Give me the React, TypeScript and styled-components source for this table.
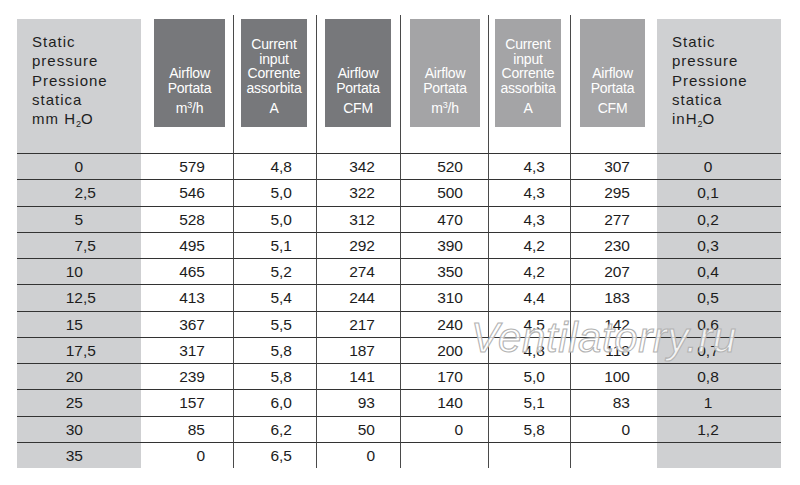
import React from "react";
import styled, { createGlobalStyle } from "styled-components";

const GlobalStyle = createGlobalStyle`
  html, body {
    margin: 0;
    padding: 0;
    background: #fff;
  }
  body {
    font-family: "Liberation Sans", Arial, sans-serif;
    color: #1c1c1c;
  }
`;

type Column = { left: number; width: number; tone: "dark" | "light"; label: string[]; unit: string; pad: number };

const columns: Column[] = [
  { left: 14, width: 71, tone: "dark", label: ["Airflow", "Portata"], unit: "m3/h", pad: 28 },
  { left: 8, width: 66, tone: "dark", label: ["Current", "input", "Corrente", "assorbita"], unit: "A", pad: 24 },
  { left: 9, width: 66, tone: "dark", label: ["Airflow", "Portata"], unit: "CFM", pad: 25 },
  { left: 10, width: 70, tone: "light", label: ["Airflow", "Portata"], unit: "m3/h", pad: 25 },
  { left: 7, width: 66, tone: "light", label: ["Current", "input", "Corrente", "assorbita"], unit: "A", pad: 25 },
  { left: 10, width: 65, tone: "light", label: ["Airflow", "Portata"], unit: "CFM", pad: 27 },
];

const rows: string[][] = [
  ["0", "579", "4,8", "342", "520", "4,3", "307", "0"],
  ["2,5", "546", "5,0", "322", "500", "4,3", "295", "0,1"],
  ["5", "528", "5,0", "312", "470", "4,3", "277", "0,2"],
  ["7,5", "495", "5,1", "292", "390", "4,2", "230", "0,3"],
  ["10", "465", "5,2", "274", "350", "4,2", "207", "0,4"],
  ["12,5", "413", "5,4", "244", "310", "4,4", "183", "0,5"],
  ["15", "367", "5,5", "217", "240", "4,5", "142", "0,6"],
  ["17,5", "317", "5,8", "187", "200", "4,8", "118", "0,7"],
  ["20", "239", "5,8", "141", "170", "5,0", "100", "0,8"],
  ["25", "157", "6,0", "93", "140", "5,1", "83", "1"],
  ["30", "85", "6,2", "50", "0", "5,8", "0", "1,2"],
  ["35", "0", "6,5", "0", "", "", "", ""],
];

const UnitText = ({ unit }: { unit: string }) =>
  unit === "m3/h" ? <>m<Sup>3</Sup>/h</> : <>{unit}</>;

export default function App() {
  return (
    <>
      <GlobalStyle />
      <Page>
        <Table>
          <PressureHead>
            Static<br />pressure<br />Pressione<br />statica<br />mm H<Sub>2</Sub>O
          </PressureHead>
          {columns.map((col, i) => (
            <HeadCell key={i} $line={i > 0}>
              <ValueBox $left={col.left} $width={col.width} $tone={col.tone}>
                <Label>
                  {col.label.map((l) => (
                    <div key={l}>{l}</div>
                  ))}
                </Label>
                <Unit><UnitText unit={col.unit} /></Unit>
              </ValueBox>
            </HeadCell>
          ))}
          <PressureHead>
            Static<br />pressure<br />Pressione<br />statica<br />inH<Sub>2</Sub>O
          </PressureHead>

          {rows.map((row, r) => {
            const [whole, frac] = row[0].split(",");
            return (
              <React.Fragment key={r}>
                <PressureCell>
                  <Whole>{whole}</Whole>
                  {frac !== undefined && `,${frac}`}
                </PressureCell>
                {columns.map((col, i) => (
                  <Cell key={i} $line={i > 0} $pad={col.pad}>
                    {row[i + 1]}
                  </Cell>
                ))}
                <InchCell>{row[7]}</InchCell>
              </React.Fragment>
            );
          })}
        </Table>
        <Watermark>Ventilatorry.ru</Watermark>
      </Page>
    </>
  );
}

const Page = styled.div`
  position: relative;
  width: 800px;
  height: 485px;
  padding: 15px 0 0 17px;
  box-sizing: border-box;
`;

const Table = styled.div`
  display: grid;
  grid-template-columns: 124px 92px 83px 84px 88px 82px 87px 124px;
  grid-template-rows: 138px repeat(12, 26.25px);
`;

const PressureHead = styled.div`
  margin-top: 4px;
  padding: 13px 0 0 15px;
  background: #cfd0d2;
  font-size: 15px;
  line-height: 19.3px;
  letter-spacing: 1px;
  color: #1e1e1e;
`;

const Sub = styled.sub`
  font-size: 9px;
  line-height: 0;
  vertical-align: -3px;
  letter-spacing: 0;
`;

const Sup = styled.sup`
  font-size: 9px;
  line-height: 0;
  vertical-align: 5px;
`;

const HeadCell = styled.div<{ $line: boolean }>`
  border-left: ${(p) => (p.$line ? "1px solid #4a4a4a" : "none")};
  padding-top: 4px;
`;

const ValueBox = styled.div<{ $left: number; $width: number; $tone: "dark" | "light" }>`
  margin-left: ${(p) => p.$left - 1}px;
  width: ${(p) => p.$width}px;
  height: 108px;
  box-sizing: border-box;
  padding-bottom: 11px;
  background: ${(p) => (p.$tone === "dark" ? "#77787b" : "#a4a4a6")};
  color: #fff;
  display: flex;
  flex-direction: column;
  justify-content: flex-end;
  align-items: center;
  text-align: center;
  font-size: 14px;
  letter-spacing: -0.2px;
`;

const Label = styled.div`
  line-height: 14.5px;
`;

const Unit = styled.div`
  margin-top: 6px;
  line-height: 15px;
`;

const BodyCell = styled.div`
  border-top: 1px solid #333;
  font-size: 15.5px;
  line-height: 25px;
  white-space: nowrap;
`;

const PressureCell = styled(BodyCell)`
  background: #cfd0d2;
  padding-left: 36px;
`;

const Whole = styled.span`
  display: inline-block;
  width: 30px;
  text-align: right;
`;

const Cell = styled(BodyCell)<{ $line: boolean; $pad: number }>`
  border-left: ${(p) => (p.$line ? "1px solid #4a4a4a" : "none")};
  padding-right: ${(p) => p.$pad}px;
  text-align: right;
`;

const InchCell = styled(BodyCell)`
  background: #cfd0d2;
  padding-right: 22px;
  text-align: center;
`;

const Watermark = styled.div`
  position: absolute;
  left: 471px;
  top: 317px;
  font-size: 42px;
  line-height: 1;
  font-style: italic;
  letter-spacing: 0.6px;
  color: rgba(255, 255, 255, 0.75);
  -webkit-text-stroke: 1.1px #b3b3b3;
  pointer-events: none;
`;
